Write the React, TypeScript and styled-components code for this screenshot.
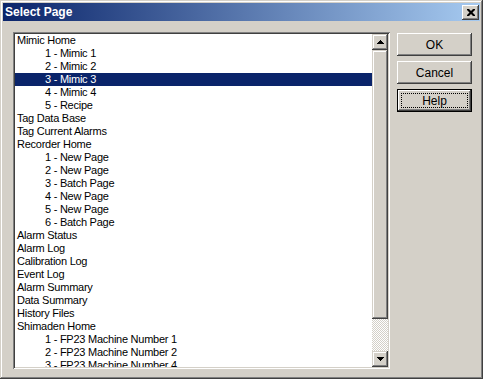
import React from "react";
import styled, { createGlobalStyle } from "styled-components";

const GlobalStyle = createGlobalStyle`
  html, body {
    margin: 0;
    padding: 0;
    background: #d4d0c8;
  }
  * {
    box-sizing: border-box;
  }
`;

const Window = styled.div`
  width: 483px;
  height: 379px;
  display: flex;
  flex-direction: column;
  padding: 3px;
  background: #d4d0c8;
  font-family: "Liberation Sans", Arial, sans-serif;
  font-size: 11px;
  color: #000;
  box-shadow: inset -1px -1px 0 #404040, inset 1px 1px 0 #d4d0c8,
    inset -2px -2px 0 #808080, inset 2px 2px 0 #ffffff;
`;

const TitleBar = styled.div`
  height: 18px;
  display: flex;
  align-items: center;
  justify-content: space-between;
  padding: 0 1px 0 2px;
  background: linear-gradient(to right, #0a246a, #a6caf0);
`;

const Title = styled.span`
  color: #fff;
  font-weight: bold;
  font-size: 12px;
`;

const CloseButton = styled.div`
  width: 17px;
  height: 15px;
  display: flex;
  align-items: center;
  justify-content: center;
  background: #d4d0c8;
  box-shadow: inset -1px -1px 0 #404040, inset 1px 1px 0 #ffffff,
    inset -2px -2px 0 #808080;
`;

const Body = styled.div`
  flex: 1;
  display: flex;
  gap: 7px;
  padding: 11px 8px 7px 10px;
`;

const ListBox = styled.div`
  width: 377px;
  height: 337px;
  display: flex;
  padding: 2px;
  background: #fff;
  box-shadow: inset 1px 1px 0 #808080, inset -1px -1px 0 #ffffff,
    inset 2px 2px 0 #404040, inset -2px -2px 0 #d4d0c8;
`;

const Items = styled.div`
  flex: 1;
  overflow: hidden;
`;

const Item = styled.div<{ $indent?: boolean; $selected?: boolean }>`
  height: 13px;
  line-height: 13px;
  white-space: nowrap;
  letter-spacing: -0.25px;
  padding-left: ${(p) => (p.$indent ? "30px" : "2px")};
  background: ${(p) => (p.$selected ? "#0a246a" : "transparent")};
  color: ${(p) => (p.$selected ? "#fff" : "#000")};
`;

const ScrollBar = styled.div`
  width: 16px;
  display: flex;
  flex-direction: column;
`;

const RaisedBox = styled.div<{ $h?: number }>`
  height: ${(p) => (p.$h ? `${p.$h}px` : "16px")};
  flex-shrink: 0;
  display: flex;
  align-items: center;
  justify-content: center;
  background: #d4d0c8;
  box-shadow: inset -1px -1px 0 #404040, inset 1px 1px 0 #d4d0c8,
    inset -2px -2px 0 #808080, inset 2px 2px 0 #ffffff;
`;

const Track = styled.div`
  flex: 1;
  background-color: #fff;
  background-image: repeating-conic-gradient(#d4d0c8 0 25%, #fff 0 50%);
  background-size: 2px 2px;
`;

const Buttons = styled.div`
  display: flex;
  flex-direction: column;
  gap: 5px;
  padding-top: 1px;
`;

const Button = styled.div<{ $default?: boolean }>`
  width: 75px;
  height: 23px;
  display: flex;
  align-items: center;
  justify-content: center;
  font-size: 12px;
  background: #d4d0c8;
  position: relative;
  border: ${(p) => (p.$default ? "1px solid #000" : "none")};
  box-shadow: ${(p) =>
    p.$default
      ? "inset -1px -1px 0 #404040, inset 1px 1px 0 #ffffff, inset -2px -2px 0 #808080"
      : "inset -1px -1px 0 #404040, inset 1px 1px 0 #ffffff, inset -2px -2px 0 #808080, inset 2px 2px 0 #d4d0c8"};
`;

const FocusRing = styled.span`
  position: absolute;
  inset: 3px;
  border: 1px dotted #000;
`;

const ArrowUp = () => (
  <svg width="7" height="4" viewBox="0 0 7 4">
    <path d="M3 0h1v1h1v1h1v1h1v1H0V3h1V2h1V1h1z" fill="#000" />
  </svg>
);

const ArrowDown = () => (
  <svg width="7" height="4" viewBox="0 0 7 4">
    <path d="M0 0h7v1H6v1H5v1H4v1H3V3H2V2H1V1H0z" fill="#000" />
  </svg>
);

const CloseIcon = () => (
  <svg width="8" height="7" viewBox="0 0 8 7">
    <path
      d="M0 0h2l2 2 2-2h2v1L5.5 3.5 8 6v1H6L4 5 2 7H0V6l2.5-2.5L0 1z"
      fill="#000"
    />
  </svg>
);

type Entry = { label: string; indent?: boolean };

const entries: Entry[] = [
  { label: "Mimic Home" },
  { label: "1 - Mimic 1", indent: true },
  { label: "2 - Mimic 2", indent: true },
  { label: "3 - Mimic 3", indent: true },
  { label: "4 - Mimic 4", indent: true },
  { label: "5 - Recipe", indent: true },
  { label: "Tag Data Base" },
  { label: "Tag Current Alarms" },
  { label: "Recorder Home" },
  { label: "1 - New Page", indent: true },
  { label: "2 - New Page", indent: true },
  { label: "3 - Batch Page", indent: true },
  { label: "4 - New Page", indent: true },
  { label: "5 - New Page", indent: true },
  { label: "6 - Batch Page", indent: true },
  { label: "Alarm Status" },
  { label: "Alarm Log" },
  { label: "Calibration Log" },
  { label: "Event Log" },
  { label: "Alarm Summary" },
  { label: "Data Summary" },
  { label: "History Files" },
  { label: "Shimaden Home" },
  { label: "1 - FP23 Machine Number 1", indent: true },
  { label: "2 - FP23 Machine Number 2", indent: true },
  { label: "3 - FP23 Machine Number 4", indent: true },
];

const App = () => {
  const selected = 3;
  return (
    <>
      <GlobalStyle />
      <Window>
        <TitleBar>
          <Title>Select Page</Title>
          <CloseButton>
            <CloseIcon />
          </CloseButton>
        </TitleBar>
        <Body>
          <ListBox>
            <Items>
              {entries.map((e, i) => (
                <Item key={i} $indent={e.indent} $selected={i === selected}>
                  {e.label}
                </Item>
              ))}
            </Items>
            <ScrollBar>
              <RaisedBox>
                <ArrowUp />
              </RaisedBox>
              <RaisedBox $h={269} />
              <Track />
              <RaisedBox>
                <ArrowDown />
              </RaisedBox>
            </ScrollBar>
          </ListBox>
          <Buttons>
            <Button>OK</Button>
            <Button>Cancel</Button>
            <Button $default>
              <FocusRing />
              Help
            </Button>
          </Buttons>
        </Body>
      </Window>
    </>
  );
};

export default App;
